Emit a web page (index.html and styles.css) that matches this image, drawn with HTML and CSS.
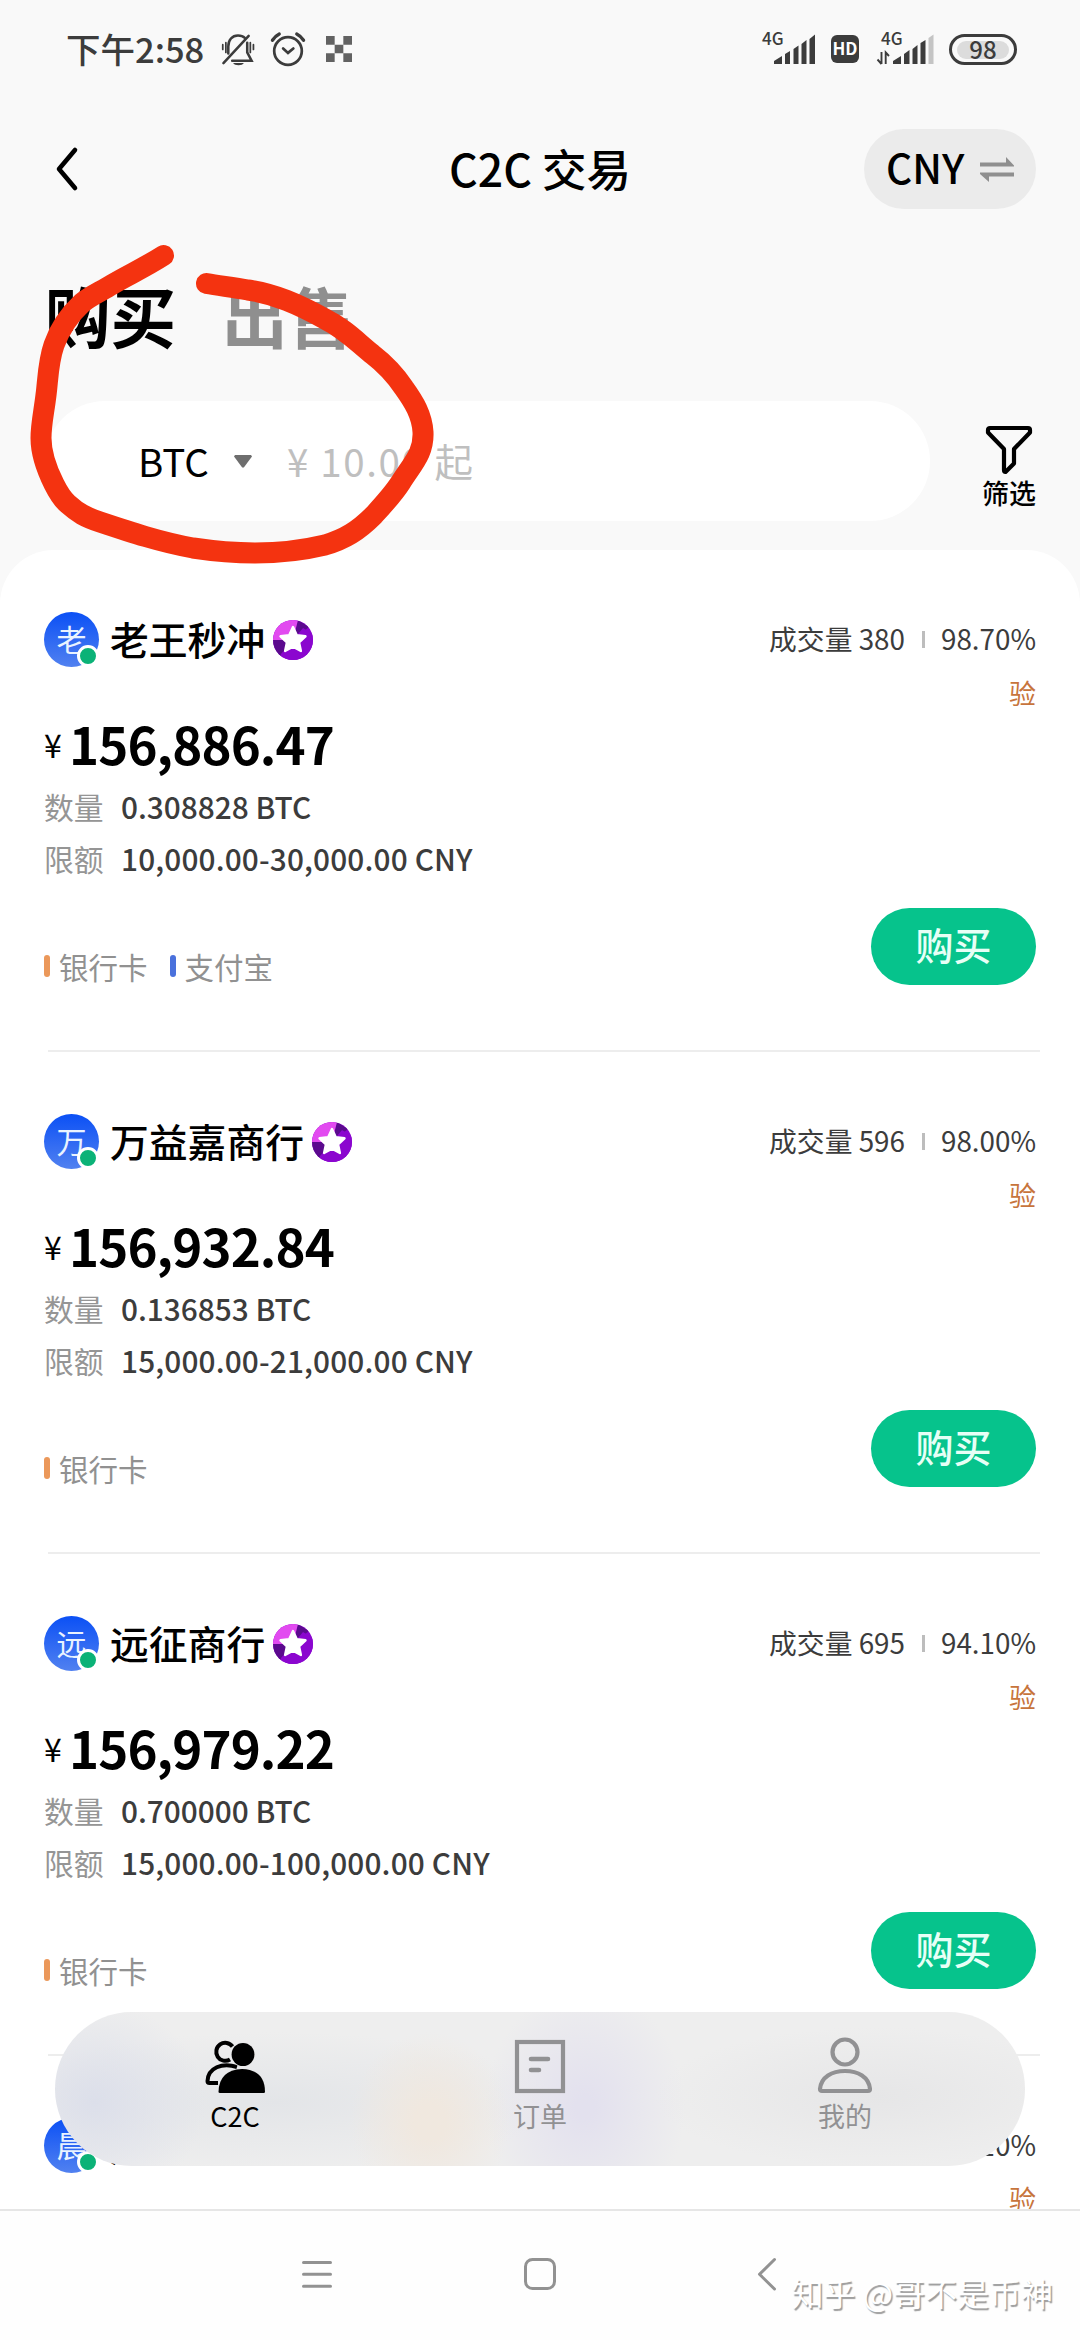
FILE: index.html
```html
<!DOCTYPE html>
<html lang="zh-CN">
<head>
<meta charset="utf-8">
<title>C2C 交易</title>
<link rel="stylesheet" href="styles.css">
</head>
<body>
<svg class="defs" aria-hidden="true">
  <defs>
    <clipPath id="badge-clip"><circle cx="20" cy="20" r="20"/></clipPath>
    <symbol id="badge" viewBox="0 0 40 40">
      <g clip-path="url(#badge-clip)">
        <rect width="40" height="40" fill="#8b06cf"/>
        <path d="M0 0H26L20 20L0 22Z" fill="#e24af0"/>
        <path d="M25 0L36 7L20 20Z" fill="#5b0a8e"/>
        <path d="M0 20L20 20L8 36L0 34Z" fill="#5b0a8e"/>
        <path d="M30 8L40 14V40H6L8 34L20 20Z" fill="#8b06cf"/>
      </g>
      <path d="M20 7L23.800 15.200L32.500 16.300L26.100 22.400L27.900 31L20 26.800L12.100 31L13.900 22.400L7.500 16.300L16.200 15.200Z" fill="#fff" stroke="#fff" stroke-width="2.400" stroke-linejoin="round"/>
    </symbol>
  </defs>
</svg>
<div class="screen">
  <header class="status">
    <div class="status-left">
      <span class="clock">下午2:58</span>
      <svg class="bell" viewBox="0 0 34 34" fill="none" stroke="#3c3c3c" stroke-width="2.600" stroke-linecap="round">
        <path d="M7 21V14C7 7 11 2.500 17 2.500C20 2.500 22.500 3.500 24 5M26.500 10V20L31 28.500H11"/>
        <path d="M2 31L28 3"/>
        <path d="M1.300 12V17M4.500 10V20M29.700 10V20M32.900 12V17" stroke-width="1.800"/>
        <path d="M12 31H23C21.500 34 13.500 34 12 31Z" fill="#3c3c3c" stroke="none"/>
      </svg>
      <svg class="alarm" viewBox="0 0 36 36" fill="none" stroke="#3c3c3c" stroke-width="2.800" stroke-linecap="round">
        <circle cx="18" cy="19.500" r="14.200"/>
        <path d="M13 17L18 21.500L23.500 17"/>
        <path d="M2 8.500C4 5.500 6 3.500 9 2M34 8.500C32 5.500 30 3.500 27 2" stroke-width="3.400"/>
      </svg>
      <svg class="checker" viewBox="0 0 27 27" fill="#626262"><path d="M0 0H9V9H18V0H27V9H18V18H27V27H18V18H9V27H0V18H9V9H0Z"/></svg>
    </div>
    <div class="status-right">
      <svg class="signal one" viewBox="0 0 54 32">
        <text x="0" y="11.500" class="net">4G</text>
        <g fill="#3c3c3c"><path d="M12 31V28L20 23V31ZM23 31V21L28 18V31ZM31.500 31V16L36.500 12.500V31ZM39.500 31V11L44.500 7V31ZM47.500 31V6L53 1.500V31Z"/></g>
      </svg>
      <span class="hd">HD</span>
      <svg class="signal two" viewBox="0 0 58 32">
        <text x="4" y="11.500" class="net">4G</text>
        <path d="M4.500 19V31M4.500 31L0.500 26.500M8.700 31V19.500L12 23" fill="none" stroke="#3c3c3c" stroke-width="1.900"/>
        <g fill="#3c3c3c"><path d="M16 31V28L24 23V31ZM27 31V21L32.500 17V31ZM35.500 31V16L40.500 12V31ZM43.500 31V10L48.500 7V31Z"/></g>
        <path d="M51.500 31V5L56.500 1.500V31Z" fill="#c4c4c4"/>
      </svg>
      <span class="battery"><span class="level">98</span></span>
    </div>
  </header>

  <nav class="topbar">
    <svg class="back" viewBox="0 0 24 44"><path d="M20 3L4 22L20 41" fill="none" stroke="#000" stroke-width="4.600" stroke-linecap="round" stroke-linejoin="round"/></svg>
    <h1 class="title">C2C 交易</h1>
    <div class="currency">CNY
      <svg class="swap" viewBox="0 0 34 26" fill="#8f8f8f"><path d="M0 5.500H26V0L34 8.500V9.500H0ZM34 15.500H0V17L9 25V19.500H34Z"/></svg>
    </div>
  </nav>

  <div class="tabs"><span class="tab active">购买</span><span class="tab">出售</span></div>

  <div class="filter-row">
    <div class="search">
      <span class="coin">BTC</span>
      <svg class="caret" viewBox="0 0 18 13"><path d="M1 0H17L18 1.500L9.800 12.500H8.200L0 1.500Z" fill="#6e6e6e"/></svg>
      <span class="hint">¥ 10.00 起</span>
    </div>
    <div class="filter">
      <svg class="funnel" viewBox="0 0 48 50"><path d="M5 3H43Q45 3 45 5V7.500L29 24V38.500L20.500 47Q19 47 19 45V24L3 7.500V5Q3 3 5 3Z" fill="none" stroke="#000" stroke-width="4.200" stroke-linejoin="round"/></svg>
      <span>筛选</span>
    </div>
  </div>

  <main class="sheet">
    <article class="offer">
      <div class="head">
        <span class="avatar">老<i class="online"></i></span>
        <span class="name">老王秒冲</span>
        <svg class="badge"><use href="#badge"/></svg>
        <span class="stats">成交量 380<i class="sep"></i>98.70%</span>
      </div>
      <div class="verify">验</div>
      <div class="price"><span class="yen">¥</span>156,886.47</div>
      <div class="info"><span class="label">数量</span>0.308828 BTC</div>
      <div class="info limit"><span class="label">限额</span>10,000.00-30,000.00 CNY</div>
      <div class="foot">
        <span class="pay bank">银行卡</span><span class="pay alipay">支付宝</span>
        <button class="buy">购买</button>
      </div>
    </article>
    <article class="offer">
      <div class="head">
        <span class="avatar">万<i class="online"></i></span>
        <span class="name">万益嘉商行</span>
        <svg class="badge"><use href="#badge"/></svg>
        <span class="stats">成交量 596<i class="sep"></i>98.00%</span>
      </div>
      <div class="verify">验</div>
      <div class="price"><span class="yen">¥</span>156,932.84</div>
      <div class="info"><span class="label">数量</span>0.136853 BTC</div>
      <div class="info limit"><span class="label">限额</span>15,000.00-21,000.00 CNY</div>
      <div class="foot">
        <span class="pay bank">银行卡</span>
        <button class="buy">购买</button>
      </div>
    </article>
    <article class="offer">
      <div class="head">
        <span class="avatar">远<i class="online"></i></span>
        <span class="name">远征商行</span>
        <svg class="badge"><use href="#badge"/></svg>
        <span class="stats">成交量 695<i class="sep"></i>94.10%</span>
      </div>
      <div class="verify">验</div>
      <div class="price"><span class="yen">¥</span>156,979.22</div>
      <div class="info"><span class="label">数量</span>0.700000 BTC</div>
      <div class="info limit"><span class="label">限额</span>15,000.00-100,000.00 CNY</div>
      <div class="foot">
        <span class="pay bank">银行卡</span>
        <button class="buy">购买</button>
      </div>
    </article>
    <article class="offer">
      <div class="head">
        <span class="avatar">晨<i class="online"></i></span>
        <span class="name">晨</span>
        <span class="stats">.10%</span>
      </div>
      <div class="verify">验</div>
    </article>
  </main>

  <footer class="sysnav">
    <svg viewBox="0 0 32 32" class="sys"><path d="M2.500 4.500H29.500M2.500 16.300H29.500M2.500 28.200H29.500"/></svg>
    <svg viewBox="0 0 32 32" class="sys"><rect x="1.500" y="1.500" width="29" height="29" rx="7"/></svg>
    <svg viewBox="0 0 32 32" class="sys"><path d="M27.500 1.500L12.500 16.300L27.500 31"/></svg>
  </footer>

  <nav class="tabbar">
    <div class="item on">
      <svg viewBox="0 0 60 54" class="ico">
        <path d="M27.500 7.500A9 9 0 1 0 25 20.500" fill="none" stroke="#000" stroke-width="4"/>
        <path d="M32 28C17 23 3 29 2.500 42Q2.500 44 4.500 44H13" fill="none" stroke="#000" stroke-width="4"/>
        <ellipse cx="38" cy="15.500" rx="12.400" ry="12.500" fill="#e9e9ea"/>
        <ellipse cx="38" cy="15.500" rx="11.400" ry="11.500"/>
        <path d="M13.500 53Q14 31 37 30Q60 31 60 53Q60 54 58.500 54H15Q13.500 54 13.500 53Z"/>
      </svg>
      <span>C2C</span>
    </div>
    <div class="item">
      <svg viewBox="0 0 60 54" class="ico" fill="none" stroke="#919193">
        <rect x="7" y="3" width="46" height="49" stroke-width="4.200"/>
        <path d="M21 20H38M21 31H29" stroke-width="4.600" stroke-linecap="round"/>
      </svg>
      <span>订单</span>
    </div>
    <div class="item">
      <svg viewBox="0 0 60 54" class="ico" fill="none" stroke="#919193" stroke-width="4.200">
        <circle cx="30" cy="13" r="12.500"/>
        <path d="M5 50C6 38 17 32 30 32C43 32 54 38 55 50Q55 52 53 52H7Q5 52 5 50Z"/>
      </svg>
      <span>我的</span>
    </div>
  </nav>

  <svg class="marker" viewBox="0 0 1080 2340">
    <path d="M163.500 255.500C144 268 128 275 113 284C100 292 90 296 82 303C69 315 60 328 54 345C48 362 48 380 46 395C44 412 41 424 41 438C41 455 47 470 54 484C58 492 62 499 68 504C78 513 85 517 100 522C130 532 160 542 193 548C213 551 234 553 255 553C280 553 300 551 325 545C345 539 358 531 374 515C386 502 394 493 401 482C413 463 424 453 423 432C422 415 414 402 404 388C394 373 385 364 372 354C356 341 345 329 325 319C298 304 275 294 248 290C233 287 220 286 206.500 283.500"/>
  </svg>
  <div class="watermark">知乎 @哥不是币神</div>
</div>
</body>
</html>
```
FILE: styles.css
```css
* { box-sizing: border-box; }
body {
  margin: 0;
  font-family: "Noto Sans CJK SC", "Noto Sans", sans-serif;
  color: #000;
}
.defs { position: absolute; width: 0; height: 0; }
.screen {
  position: relative;
  display: flex;
  flex-direction: column;
  width: 1080px;
  height: 2340px;
  overflow: hidden;
  background: #f9f9f9;
}
svg { display: block; flex: none; overflow: visible; }

.status {
  display: flex;
  justify-content: space-between;
  height: 100px;
  padding: 0 63px 0 66px;
  color: #3c3c3c;
}
.status-left, .status-right { display: flex; align-items: center; height: 98px; }
.clock { font-size: 34.500px; line-height: 93px; padding-bottom: 2px; font-weight: 500; width: 155px; white-space: nowrap; }
.bell { width: 34px; height: 33px; }
.alarm { width: 36px; height: 35px; margin-left: 15px; }
.checker { width: 26px; height: 26px; margin-left: 20px; }
.net { font-size: 17px; font-weight: 500; fill: #3c3c3c; }
.signal { height: 32px; }
.one { width: 54px; }
.hd {
  width: 28px; height: 28px; margin: 0 18px 0 15px;
  border-radius: 6px; background: #3c3c3c; color: #fff;
  font-size: 17px; line-height: 26px; font-weight: 700; text-align: center;
}
.two { width: 58px; }
.battery {
  width: 68px; height: 31px; margin-left: 14px; padding: 4px 5px;
  border: 3px solid #3c3c3c; border-radius: 16px;
}
.level {
  display: block; height: 18px; border-radius: 10px; background: #dcdcdc;
  font-size: 24px; line-height: 15px; font-weight: 500; text-align: center;
}

.topbar {
  display: grid;
  grid-template-columns: 172px 1fr 172px;
  align-items: center;
  height: 138px;
  padding: 0 44px;
}
.back { width: 24px; height: 44px; margin-left: 11px; }
.title { margin: 0; font-size: 44.500px; line-height: 58px; padding-bottom: 3px; font-weight: 500; text-align: center; }
.currency {
  display: flex; align-items: center; justify-content: space-between;
  height: 80px; padding: 0 22px 5px; border-radius: 40px;
  background: #ebebeb; font-size: 40.500px; line-height: 68px; font-weight: 500;
}
.swap { width: 34px; height: 26px; margin-top: 7px; }

.tabs {
  display: flex; gap: 46px; height: 163px; padding: 37px 45px 0;
  font-size: 65.500px; line-height: 80px; font-weight: 700;
}
.tab { color: #8f8f8f; width: 131px; }
.active { color: #000; }

.filter-row { display: flex; height: 149px; padding-left: 45px; }
.search {
  display: flex; align-items: center; width: 885px; height: 120px;
  padding-left: 93px; border-radius: 60px; background: #fff;
}
.coin { width: 96px; font-size: 38.500px; line-height: 118px; padding-bottom: 2px; }
.caret { width: 18px; height: 13px; }
.hint { margin-left: 35px; font-size: 38.500px; letter-spacing: 1.600px; color: #bfbfbf; line-height: 118px; padding-bottom: 2px; }
.filter {
  display: flex; flex-direction: column; align-items: center;
  margin-left: 39px; width: 80px; padding-top: 24px;
  font-size: 27px; line-height: 38px; font-weight: 500;
}
.funnel { width: 48px; height: 50px; margin-bottom: -1px; }

.sheet {
  flex: 1; min-height: 0; overflow: hidden;
  background: #fff; border-radius: 54px 54px 0 0;
}
.offer {
  display: flex; flex-direction: column;
  height: 502px; padding: 62px 44px 0;
}
.offer::after {
  content: ""; height: 2px; margin: auto -4px 0 4px; background: #ededed; flex: none;
}
.head { display: flex; align-items: center; height: 55px; }
.avatar {
  position: relative; width: 55px; height: 55px; margin-right: 11px;
  border-radius: 50%; background: linear-gradient(#0b50f5, #5181f0);
  color: #e9f3ff; font-size: 30px; line-height: 52px; text-align: center;
}
.online {
  position: absolute; right: 0; bottom: 0; width: 22px; height: 22px;
  border: 3px solid #fff; border-radius: 50%; background: #0bb277;
}
.name { font-size: 38.800px; line-height: 50px; padding-bottom: 4px; font-weight: 500; }
.badge { width: 40px; height: 40px; margin-left: 8px; }
.stats {
  display: flex; align-items: center; margin-left: auto;
  color: #3c3c3c; font-size: 27.800px; line-height: 50px; padding-bottom: 4px;
}
.sep { width: 3px; height: 17px; margin: 3px 16px 0 17px; background: #bdbdbd; }
.verify { height: 52px; font-size: 27px; line-height: 51px; text-align: right; color: #c7743c; }
.price {
  display: flex; height: 62px; font-size: 51px; line-height: 49px; font-weight: 700; letter-spacing: -0.900px;
}
.yen { width: 25px; font-size: 32px; line-height: 50px; font-weight: 400; }
.info {
  display: flex; height: 52px; color: #3c3c3c; font-size: 29.800px; line-height: 51px; font-weight: 500;
}
.limit { letter-spacing: 0.150px; }
.label { width: 77px; color: #959595; font-weight: 400; letter-spacing: 0; }
.foot { display: flex; align-items: center; height: 77px; margin-top: 23px; }
.pay {
  display: flex; align-items: center; margin-right: 22px;
  font-size: 29.500px; line-height: 40px; color: #919191;
  padding-top: 39px; height: 80px;
}
.pay::before { content: ""; width: 6px; height: 22px; margin-right: 9px; border-radius: 3px; background: #eb985a; }
.alipay::before { background: #4a71dc; }
.buy {
  margin: 0 0 0 auto; width: 165px; height: 77px; padding: 0 0 5px; border: 0; border-radius: 39px;
  background: #06c38c; color: #e7fff6; font: 500 38px/68px "Noto Sans CJK SC", sans-serif;
}

.sysnav {
  display: flex; justify-content: center; gap: 191px; height: 131px; padding-top: 47px;
  border-top: 2px solid #e6e6e6; background: #fefefe;
}
.sys { width: 32px; height: 32px; fill: none; stroke: #929292; stroke-width: 3; stroke-linecap: round; stroke-linejoin: round; }

.tabbar {
  position: absolute; left: 55px; top: 2012px; width: 970px; height: 154px;
  display: flex; justify-content: space-between; padding: 25px 120px 0; border-radius: 77px;
  background:
    radial-gradient(ellipse 80px 90px at 375px 110px, #f0e8df 20%, transparent 100%),
    radial-gradient(ellipse 100px 120px at 530px 95px, #e3e1ee 10%, transparent 100%),
    radial-gradient(ellipse 110px 100px at 40px 90px, #dcdfea 0%, transparent 100%),
    radial-gradient(ellipse 280px 70px at 220px 90px, #e3e5e8 0%, transparent 100%),
    radial-gradient(ellipse 220px 70px at 820px 85px, #e6e6e7 0%, transparent 100%),
    #eeeeee;
}
.item { display: flex; flex-direction: column; align-items: center; width: 120px; font-size: 27px; line-height: 40px; color: #919193; }
.item.on { color: #000; }
.ico { width: 60px; height: 54px; margin-top: 2px; margin-bottom: 3px; }

.marker { position: absolute; left: 0; top: 0; width: 1080px; height: 2340px; pointer-events: none; }
.marker path { fill: none; stroke: #f43310; stroke-width: 21; stroke-linecap: round; stroke-linejoin: round; }
.watermark {
  position: absolute; right: 27px; top: 2270px; font-size: 32px; line-height: 44px;
  color: #fff; text-shadow: 1.500px 1.500px 1px #9c9c9c; white-space: nowrap;
}
```
